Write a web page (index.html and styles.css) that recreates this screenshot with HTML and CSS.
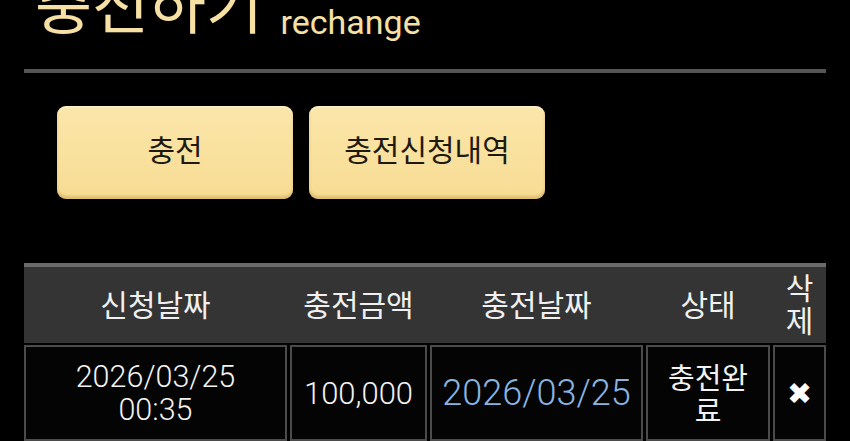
FILE: index.html
```html
<!DOCTYPE html>
<html lang="ko">
<head>
    <meta charset="UTF-8">
    <meta name="viewport" content="width=device-width, initial-scale=1.0">
    <title>충전하기</title>
    <link rel="stylesheet" href="styles.css">
</head>
<body>

<div class="page">
    <h1 class="title">충전하기 <span class="title-sub">rechange</span></h1>
    <div class="rule"></div>

    <div class="tabs">
        <button class="tab">충전</button>
        <button class="tab">충전신청내역</button>
    </div>

    <div class="history">
        <div class="history-head">
            <div class="head-cell">신청날짜</div>
            <div class="head-cell">충전금액</div>
            <div class="head-cell">충전날짜</div>
            <div class="head-cell">상태</div>
            <div class="head-cell">삭제</div>
        </div>
        <div class="history-row">
            <div class="cell cell-date">2026/03/25<br>00:35</div>
            <div class="cell cell-amount">100,000</div>
            <div class="cell cell-done">2026/03/25</div>
            <div class="cell cell-status">충전완료</div>
            <div class="cell cell-delete">✖</div>
        </div>
    </div>
</div>

</body>
</html>
```

FILE: styles.css
```css
body {
    margin: 0;
    background: #000;
    font-family: "Noto Sans CJK KR", "Noto Sans", sans-serif;
    overflow: hidden;
}
.page {
    padding: 0 24px;
}
.title {
    margin: -29px 0 0;
    padding-left: 11px;
    height: 62px;
    font-size: 62px;
    line-height: 62px;
    font-weight: 400;
    color: #f6e0a4;
    white-space: nowrap;
}
.title-sub {
    font-family: Roboto, "Noto Sans", sans-serif;
    font-size: 34px;
    margin-left: 0;
    vertical-align: -5px;
}
.rule {
    height: 4px;
    background: #555;
    margin-top: 36px;
}
.tabs {
    display: flex;
    gap: 16px;
    padding-left: 33px;
    margin-top: 33px;
}
.tab {
    width: 236px;
    height: 93px;
    padding: 0 0 10px;
    border: none;
    border-radius: 9px;
    background: linear-gradient(#fbe6aa, #f7dc93);
    box-shadow: inset 0 -3px 3px rgba(170, 130, 50, 0.35), inset 0 2px 2px rgba(255, 250, 225, 0.5);
    font-family: "Noto Sans CJK KR", sans-serif;
    font-size: 30px;
    color: #1e1a12;
    cursor: pointer;
}
.history {
    margin-top: 64px;
}
.history-head,
.history-row {
    display: grid;
    grid-template-columns: 263px 137px 213px 124px 53px;
    column-gap: 3px;
}
.history-head {
    background: #343434;
    border-top: 4px solid #6b6b6b;
    height: 76px;
}
.head-cell {
    display: flex;
    align-items: center;
    justify-content: center;
    text-align: center;
    padding-bottom: 4px;
    font-size: 30px;
    line-height: 33px;
    color: #f0f0f0;
    word-break: break-all;
}
.history-row {
    margin-top: 2px;
    height: 96px;
}
.cell {
    display: flex;
    align-items: center;
    justify-content: center;
    text-align: center;
    border: 2px solid #4b4b4b;
    background: #040404;
    color: #f2f2f2;
    font-family: Roboto, "Noto Sans", sans-serif;
    font-weight: 300;
}
.cell-date {
    font-size: 30.5px;
    line-height: 33px;
}
.cell-amount {
    font-size: 31px;
}
.cell-done {
    font-size: 36px;
    color: #8ab4e0;
}
.cell-status {
    font-family: "Noto Sans CJK KR", sans-serif;
    font-weight: 400;
    font-size: 29px;
    line-height: 33px;
    padding: 0 8px;
    word-break: break-all;
}
.cell-delete {
    font-family: "DejaVu Sans", sans-serif;
    font-weight: 700;
    font-size: 30px;
    color: #fff;
}
```
